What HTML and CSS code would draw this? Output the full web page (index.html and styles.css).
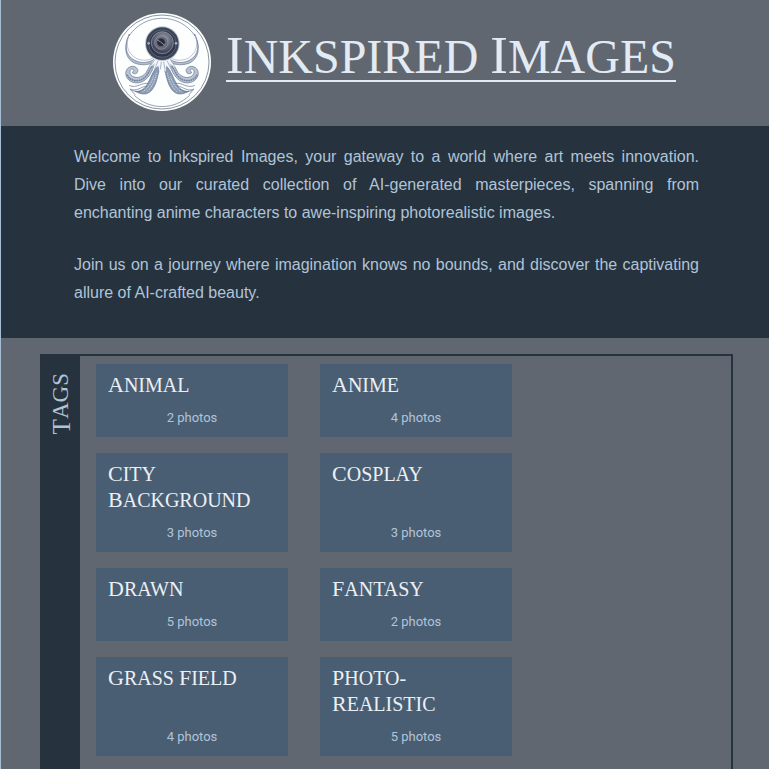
FILE: index.html
```html
<!DOCTYPE html>
<html lang="en">
<head>
<meta charset="utf-8">
<meta name="viewport" content="width=device-width, initial-scale=1">
<title>Inkspired Images</title>
<link rel="stylesheet" href="styles.css">
</head>
<body>
<header class="site-header">
  <svg class="logo" viewBox="39 39 294 294" role="img" aria-label="Octopus with a camera lens">
    <defs>
      <radialGradient id="lens" cx=".55" cy=".35" r=".7">
        <stop offset="0" stop-color="#a3a4b2"/>
        <stop offset=".45" stop-color="#6b6e80"/>
        <stop offset="1" stop-color="#2c3145"/>
      </radialGradient>
      <g id="arms" fill="none" stroke-linecap="round" stroke-linejoin="round">
        <path d="M88 103C72 135 75 166 104 181C126 192 147 188 164 177L160 187C145 196 122 197 101 188C74 173 70 138 88 103Z" fill="#b3bfce" stroke="#66768f" stroke-width="2"/>
        <path d="M86 108C76 138 84 160 108 175C128 184 148 182 162 172" stroke="#9ba9bc" stroke-width="2"/>
        <path d="M171 185C157 203 153 232 127 245C103 256 78 242 77 220C78 198 105 192 113 208C116 220 104 226 96 217C103 214 103 208 97 207C88 208 88 219 94 226C106 238 128 232 138 218C147 204 148 192 162 184Z" fill="#b9c5d4" stroke="#60718c" stroke-width="2"/>
        <path d="M82 226C92 245 116 246 131 235C144 225 148 210 156 200" stroke="#70819b" stroke-width="5" stroke-dasharray="1 6"/>
        <path d="M180 205C173 222 172 250 155 271C143 285 125 285 106 274C126 276 135 265 144 249C153 233 158 213 172 199Z" fill="#8b9cb4" stroke="#60718c" stroke-width="2"/>
        <path d="M170 220C164 244 156 262 141 275M160 231C154 250 144 266 128 275" stroke="#dbe2ea" stroke-width="3" stroke-dasharray="1 5"/>
        <path d="M144 250C125 247 111 266 89 257M139 258C123 260 111 276 90 267L105 284M131 267C118 276 108 277 97 271" stroke="#60718c" stroke-width="2"/>
      </g>
    </defs>
    <circle cx="186" cy="186" r="147" fill="#fdfefe"/>
    <circle cx="186" cy="186" r="141" fill="none" stroke="#536176" stroke-width="2"/>
    <path d="M87 108C134 37 238 37 285 108M103 286C150 331 222 331 269 286" fill="none" stroke="#64748b" stroke-width="2"/>
    <use href="#arms"/>
    <use href="#arms" transform="translate(372 0) scale(-1 1)"/>
    <path d="M163 176L148 202L164 190L160 211L176 196L178 215L187 203L197 215L199 195L213 210L209 190L226 202L210 176Z" fill="#f4f7fa"/>
    <path d="M164 180L153 195M174 183L164 207M184 185L181 208M191 185L195 208M202 183L212 206M211 180L223 195" stroke="#8696ad" stroke-width="2"/>
    <circle cx="187" cy="131" r="52" fill="#c1c7cf"/>
    <circle cx="187" cy="131" r="49" fill="#3b465b"/>
    <circle cx="187" cy="131" r="41" fill="#303549" stroke="#697286" stroke-width="2"/>
    <circle cx="187" cy="128" r="33" fill="url(#lens)" stroke="#a2a7b3" stroke-width="2"/>
    <circle cx="184" cy="128" r="20" fill="#686b7c" stroke="#9294a2" stroke-width="2"/>
    <circle cx="183" cy="127" r="13" fill="#282b39" stroke="#777a89" stroke-width="2"/>
    <path d="M171 119L182 126L195 137" stroke="#92959f" stroke-width="3" fill="none"/>
    <circle cx="146" cy="130" r="4" fill="#a7afbd"/>
    <circle cx="228" cy="130" r="4" fill="#a7afbd"/>
  </svg>
  <h1><a class="site-title" href="#"><span class="word">Inkspired</span> <span class="word">Images</span></a></h1>
</header>
<section class="intro">
  <p>Welcome to Inkspired Images, your gateway to a world where art meets innovation. Dive into our curated collection of AI-generated masterpieces, spanning from enchanting anime characters to awe-inspiring photorealistic images.</p>
  <p>Join us on a journey where imagination knows no bounds, and discover the captivating allure of AI-crafted beauty.</p>
</section>
<main class="tags">
  <div class="tags-rail"><h2 class="tags-title"><span class="word">Tags</span></h2></div>
  <div class="tag-grid">
    <a class="card" href="#"><h3><span class="word">Animal</span></h3><p>2 photos</p></a>
    <a class="card" href="#"><h3><span class="word">Anime</span></h3><p>4 photos</p></a>
    <a class="card" href="#"><h3><span class="word">City</span> <span class="word">Background</span></h3><p>3 photos</p></a>
    <a class="card" href="#"><h3><span class="word">Cosplay</span></h3><p>3 photos</p></a>
    <a class="card" href="#"><h3><span class="word">Drawn</span></h3><p>5 photos</p></a>
    <a class="card" href="#"><h3><span class="word">Fantasy</span></h3><p>2 photos</p></a>
    <a class="card" href="#"><h3><span class="word">Grass</span> <span class="word">Field</span></h3><p>4 photos</p></a>
    <a class="card" href="#"><h3><span class="word">Photo-</span><span class="word">Realistic</span></h3><p>5 photos</p></a>
  </div>
</main>
</body>
</html>
```
FILE: styles.css
```css
* {
  box-sizing: border-box;
}

body {
  margin: 0;
  border-left: 1px solid #a6bfd3;
  background: #606770;
  color: #b0c4d8;
  font-family: "Liberation Sans", Arial, sans-serif;
}

h1, h2, h3, p {
  margin: 0;
}

h1, h2, h3 {
  font-family: "Liberation Serif", serif;
  font-weight: 400;
  text-transform: uppercase;
}

a {
  color: inherit;
  text-decoration: none;
}

/* Capitals with a slightly taller initial on each word */
.word {
  display: inline-block;
}

.word::first-letter {
  font-size: 110%;
}

.site-header {
  display: flex;
  justify-content: center;
  align-items: center;
  gap: 15px;
  min-height: 126px;
  padding: 0 20px 2px 39px;
}

.site-header h1 {
  padding-bottom: 10px;
}

.logo {
  flex: none;
  width: 98px;
  height: 98px;
}

.site-title {
  display: block;
  border-bottom: 2px solid #e2eaf3;
  color: #e2eaf3;
  font-size: 48px;
  line-height: 46px;
}

.site-title .word {
  vertical-align: top;
}

.intro {
  padding: 17px 70px 31px 73px;
  background: #26323d;
  font-size: 16px;
  line-height: 28px;
  text-align: justify;
}

.intro p + p {
  margin-top: 24px;
}

.tags {
  display: flex;
  margin: 16px 36px 16px 39px;
  border: 2px solid #26323d;
}

.tags-rail {
  flex: none;
  width: 38px;
  padding-top: 17px;
  background: #26323d;
}

.tags-title {
  width: 38px;
  font-size: 23px;
  line-height: 38px;
  writing-mode: vertical-rl;
  transform: rotate(180deg);
}

.tag-grid {
  flex: 1;
  display: grid;
  grid-template-columns: repeat(auto-fill, 192px);
  gap: 16px 32px;
  padding: 8px 16px 32px;
}

.card {
  display: flex;
  flex-direction: column;
  justify-content: space-between;
  gap: 8px;
  padding: 8px 12px;
  background: #4a5e73;
}

.card h3 {
  color: #eaf0f5;
  font-size: 20px;
  line-height: 26px;
}

.card .word {
  vertical-align: top;
}

.card p {
  font-family: Roboto, sans-serif;
  font-size: 13px;
  line-height: 23px;
  text-align: center;
}
```
